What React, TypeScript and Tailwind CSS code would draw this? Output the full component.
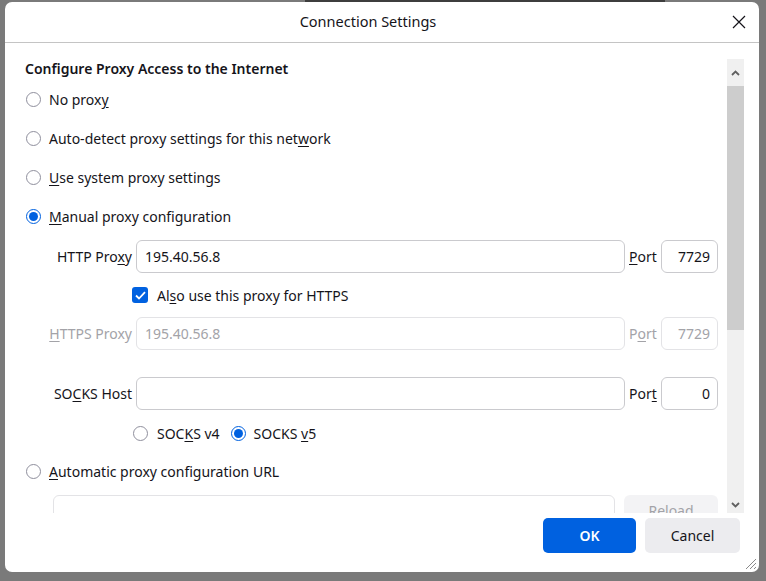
const font = { fontFamily: '"Noto Sans", "Open Sans", sans-serif' };

function Radio({ checked, disabled }: { checked?: boolean; disabled?: boolean }) {
  if (checked) {
    return (
      <span className="flex h-[15px] w-[15px] shrink-0 items-center justify-center rounded-full border-[1.5px] border-[#0061e0] bg-white">
        <span className="h-[9px] w-[9px] rounded-full bg-[#0061e0]" />
      </span>
    );
  }
  return (
    <span
      className={
        "h-[15px] w-[15px] shrink-0 rounded-full border bg-white " +
        (disabled ? "border-[#c8c8c8]" : "border-[#8f8f9d]")
      }
    />
  );
}

function RadioRow({ label, checked }: { label: React.ReactNode; checked?: boolean }) {
  return (
    <div className="flex h-[39px] items-center gap-[8px] pl-[1px]">
      <Radio checked={checked} />
      <span>{label}</span>
    </div>
  );
}

function Field({
  label,
  value,
  port,
  portLabel,
  disabled,
}: {
  label: React.ReactNode;
  value: string;
  port: string;
  portLabel: React.ReactNode;
  disabled?: boolean;
}) {
  const text = disabled ? "text-[#a3a3a8]" : "text-[#15141a]";
  const border = disabled ? "border-[#e3e3e6]" : "border-[#cacace]";
  return (
    <div className="flex h-[33px] items-center">
      <span className={"w-[107px] text-right " + text}>{label}</span>
      <div className={"ml-[4px] flex h-full w-[489px] items-center rounded-[6px] border pl-[8px] " + border + " " + text}>
        {value}
      </div>
      <span className={"ml-[4px] w-[27px] " + text}>{portLabel}</span>
      <div className={"ml-[5px] flex h-full w-[57px] items-center justify-end rounded-[6px] border pr-[7px] " + border + " " + text}>
        {port}
      </div>
    </div>
  );
}

function Chevron({ down }: { down?: boolean }) {
  return (
    <svg width="9" height="6" viewBox="0 0 9 6" className={down ? "rotate-180" : ""}>
      <path d="M1 5 L4.5 1.5 L8 5" fill="none" stroke="#606060" strokeWidth="1.8" />
    </svg>
  );
}

export default function App() {
  return (
    <div className="flex h-[581px] w-[766px] flex-col overflow-hidden bg-[#7a7a7a] text-[14px] text-[#15141a]" style={font}>
      <div className="flex h-[2px] shrink-0">
        <div className="ml-[305px] w-[360px] bg-[#3d3d3d]" />
      </div>

      <div className="ml-[5px] flex h-[570px] w-[754px] flex-col overflow-hidden rounded-[7px] bg-white">
        {/* title bar */}
        <div className="grid h-[41px] shrink-0 grid-cols-[1fr_auto_1fr] items-center border-b border-[#c4c4c4]">
          <div />
          <div className="pr-[28px] text-[14.5px]">Connection Settings</div>
          <div className="flex justify-end pr-[13px]">
            <svg width="14" height="14" viewBox="0 0 14 14">
              <path d="M1 1 L13 13 M13 1 L1 13" stroke="#15141a" strokeWidth="1.2" />
            </svg>
          </div>
        </div>

        {/* scrolling body */}
        <div className="flex h-[470px] shrink-0 pt-[16px]">
          <div className="w-[693px] ml-[20px] overflow-hidden">
            <div className="h-[19px] leading-[19px] font-semibold">Configure Proxy Access to the Internet</div>
            <div className="mt-[2px]">
              <RadioRow label={<>No prox<u className="underline-offset-2">y</u></>} />
              <RadioRow label={<>Auto-detect proxy settings for this net<u className="underline-offset-2">w</u>ork</>} />
              <RadioRow label={<><u className="underline-offset-2">U</u>se system proxy settings</>} />
              <RadioRow checked label={<><u className="underline-offset-2">M</u>anual proxy configuration</>} />
            </div>

            <div className="mt-[4px]">
              <Field
                label={<>HTTP Pro<u className="underline-offset-2">x</u>y</>}
                value="195.40.56.8"
                portLabel={<><u className="underline-offset-2">P</u>ort</>}
                port="7729"
              />
            </div>
            <div className="flex h-[44px] items-center gap-[9px] pl-[107px]">
              <span className="flex h-[16px] w-[16px] items-center justify-center rounded-[3px] bg-[#0061e0]">
                <svg width="11" height="9" viewBox="0 0 11 9">
                  <path d="M1 4.5 L4 7.5 L10 1.2" fill="none" stroke="white" strokeWidth="1.8" />
                </svg>
              </span>
              <span>Al<u className="underline-offset-2">s</u>o use this proxy for HTTPS</span>
            </div>
            <Field
              disabled
              label={<><u className="underline-offset-2">H</u>TTPS Proxy</>}
              value="195.40.56.8"
              portLabel={<>P<u className="underline-offset-2">o</u>rt</>}
              port="7729"
            />

            <div className="mt-[27px]">
              <Field
                label={<>SO<u className="underline-offset-2">C</u>KS Host</>}
                value=""
                portLabel={<>Por<u className="underline-offset-2">t</u></>}
                port="0"
              />
            </div>
            <div className="flex h-[46px] items-center pl-[108px]">
              <Radio />
              <span className="ml-[9px]">SOC<u className="underline-offset-2">K</u>S v4</span>
              <span className="ml-[11px]"><Radio checked /></span>
              <span className="ml-[8px]">SOCKS <u className="underline-offset-2">v</u>5</span>
            </div>
            <div className="flex h-[30px] items-center gap-[8px] pl-[1px]">
              <Radio />
              <span><u className="underline-offset-2">A</u>utomatic proxy configuration URL</span>
            </div>
            <div className="mt-[9px] flex h-[33px] pl-[28px]">
              <div className="h-full w-[562px] rounded-[6px] border border-[#e3e3e6]" />
              <div className="ml-[9px] flex h-full w-[94px] items-start justify-center rounded-[6px] bg-[#f3f3f5] pt-[6px] leading-[20px] text-[#a3a3a8]">
                Reload
              </div>
            </div>
          </div>

          {/* scrollbar */}
          <div className="ml-[9px] flex w-[17px] flex-col bg-[#f0f0f0]">
            <div className="flex h-[27px] items-center justify-center">
              <Chevron />
            </div>
            <div className="h-[244px] bg-[#cdcdcd]" />
            <div className="flex-1" />
            <div className="flex h-[17px] items-center justify-center">
              <Chevron down />
            </div>
          </div>
        </div>

        {/* buttons */}
        <div className="relative flex flex-1 justify-end gap-[9px] pr-[19px] pt-[5px]">
          <div className="flex h-[35px] w-[93px] items-center justify-center rounded-[5px] bg-[#0061e0] font-semibold text-white">
            OK
          </div>
          <div className="flex h-[35px] w-[95px] items-center justify-center rounded-[5px] bg-[#ececef]">
            Cancel
          </div>
          <svg className="absolute bottom-[2px] right-[2px]" width="13" height="13" viewBox="0 0 13 13">
            <path d="M12 2 L2 12 M12 6 L6 12 M12 10 L10 12" stroke="#8a8a8a" strokeWidth="1" />
          </svg>
        </div>
      </div>
    </div>
  );
}
